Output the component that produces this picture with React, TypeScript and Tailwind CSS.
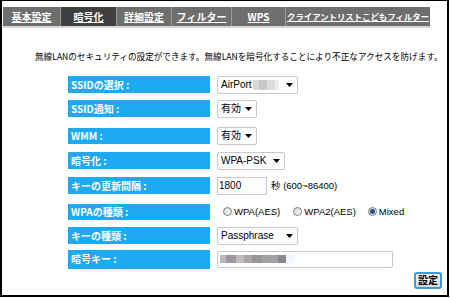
import React from "react";

const F = { fontFamily: '"Noto Sans CJK JP", "Noto Sans", sans-serif' };
const L = { fontFamily: '"Liberation Sans", "Noto Sans CJK JP", sans-serif' };

function Arrow() {
  return (
    <svg width="7" height="4" viewBox="0 0 7 4" className="shrink-0">
      <path d="M0 0 L7 0 L3.5 4 Z" fill="#000" />
    </svg>
  );
}

function Select({ w, children }: { w: number; children: React.ReactNode }) {
  return (
    <div
      className="h-[18px] border border-[#c8c8c8] bg-white flex items-center justify-between pl-[3px] pr-[4px] text-[10px] text-black leading-none rounded-[2px]"
      style={{ width: w, ...L }}
    >
      <div className="flex items-center">{children}</div>
      <Arrow />
    </div>
  );
}

function Label({ text, h = 17 }: { text: string; h?: number }) {
  return (
    <div
      className="w-[142px] bg-[#1ea9f5] text-white font-bold text-[10px] flex items-center pl-[3px] shrink-0 leading-none"
      style={{ height: h }}
    >
      {text}
    </div>
  );
}

function Radio({ checked }: { checked?: boolean }) {
  return (
    <span className="inline-flex w-[9px] h-[9px] rounded-full border border-[#7a7a7a] bg-gradient-to-br from-[#d4d4d4] to-[#ffffff] items-center justify-center mr-[2px]">
      {checked && <span className="w-[5px] h-[5px] rounded-full bg-[#1d4f9a]" />}
    </span>
  );
}

export default function App() {
  const tabs = [
    { t: "基本設定", w: 57 },
    { t: "暗号化", w: 56, active: true },
    { t: "詳細設定", w: 55 },
    { t: "フィルター", w: 60 },
    { t: "WPS", w: 54 },
    { t: "クライアントリストこどもフィルター", w: 145, small: true },
  ];
  return (
    <div className="w-[450px] h-[298px] bg-white overflow-hidden" style={F}>
      <div className="w-[449px] h-[297px] border-l-2 border-r-2 border-t border-b-2 border-black">
        {/* tabs */}
        <div className="ml-[1px] mt-[6px] flex h-[21px] w-[427px] bg-[#6e6e6e] border-b-2 border-[#d8d8d8]">
          {tabs.map((tab, i) => (
            <div
              key={i}
              className={`h-full flex items-center justify-center text-white underline font-bold leading-none whitespace-nowrap overflow-hidden ${
                tab.small ? "text-[8.4px]" : "text-[10px]"
              } ${tab.active ? "bg-[#404040]" : ""} ${i > 0 ? "border-l border-[#9a9a9a]" : ""}`}
              style={{ width: tab.w }}
            >
              {tab.t}
            </div>
          ))}
        </div>
        {/* description */}
        <div className="mt-[24px] ml-[33px] text-[8.6px] text-black leading-none whitespace-nowrap">
          無線LANのセキュリティの設定ができます。無線LANを暗号化することにより不正なアクセスを防げます。
        </div>
        {/* form */}
        <div className="ml-[66px] flex flex-col">
          <div className="mt-[15px] flex items-center gap-[7px]">
            <Label text="SSIDの選択 :" />
            <Select w={81}>
              <span>AirPort</span>
              <span className="ml-[1px] flex h-[10px]">
                <span className="w-[6px] bg-[#d9d9d9]" />
                <span className="w-[8px] bg-[#c9c7c9]" />
                <span className="w-[8px] bg-[#dcdcdc]" />
                <span className="w-[4px] bg-[#eeeeee]" />
              </span>
            </Select>
          </div>
          <div className="mt-[6px] flex items-center gap-[7px]">
            <Label text="SSID通知 :" />
            <Select w={40}>
              <span>有効</span>
            </Select>
          </div>
          <div className="mt-[9px] flex items-center gap-[7px]">
            <Label text="WMM :" h={16} />
            <Select w={40}>
              <span>有効</span>
            </Select>
          </div>
          <div className="mt-[7px] flex items-center gap-[7px]">
            <Label text="暗号化 :" />
            <Select w={68}>
              <span>WPA-PSK</span>
            </Select>
          </div>
          <div className="mt-[7px] flex items-center gap-[7px]">
            <Label text="キーの更新間隔 :" />
            <div
              className="w-[50px] h-[18px] border border-[#c8c8c8] bg-white flex items-center pl-[1px] text-[10px] leading-none"
              style={L}
            >
              1800
            </div>
            <span className="ml-[-3px] text-[9.5px] leading-none" style={L}>
              秒 (600~86400)
            </span>
          </div>
          <div className="mt-[9px] flex items-center gap-[7px]">
            <Label text="WPAの種類 :" h={16} />
            <div className="flex items-center text-[9.5px] leading-none text-black pl-[6px]" style={L}>
              <Radio />
              <span className="mr-[13px]">WPA(AES)</span>
              <Radio />
              <span className="mr-[12px]">WPA2(AES)</span>
              <Radio checked />
              <span>Mixed</span>
            </div>
          </div>
          <div className="mt-[7px] flex items-center gap-[7px]">
            <Label text="キーの種類 :" />
            <Select w={81}>
              <span>Passphrase</span>
            </Select>
          </div>
          <div className="mt-[5px] flex items-center gap-[7px]">
            <Label text="暗号キー :" h={19} />
            <div className="w-[176px] h-[17px] border border-[#c8c8c8] bg-white flex items-center pl-[2px] rounded-[2px]">
              <span className="flex h-[8px]">
                <span className="w-[6px] bg-[#b9b9b9]" />
                <span className="w-[10px] bg-[#9e989e]" />
                <span className="w-[8px] bg-[#c0bcbc]" />
                <span className="w-[8px] bg-[#a8a6a8]" />
                <span className="w-[10px] bg-[#989598]" />
                <span className="w-[16px] bg-[#a4a1a4]" />
                <span className="w-[8px] bg-[#8d888d]" />
                <span className="w-[8px] bg-[#f0f8ff]" />
              </span>
            </div>
          </div>
        </div>
        <div className="flex justify-end pr-[5px] mt-[3px]">
          <div className="w-[28px] h-[17px] border-2 border-[#3a9ad8] rounded-[3px] bg-gradient-to-b from-[#f8f8f8] to-[#d8d8d8] flex items-center justify-center text-[10px] font-bold leading-none text-black">
            設定
          </div>
        </div>
      </div>
    </div>
  );
}
